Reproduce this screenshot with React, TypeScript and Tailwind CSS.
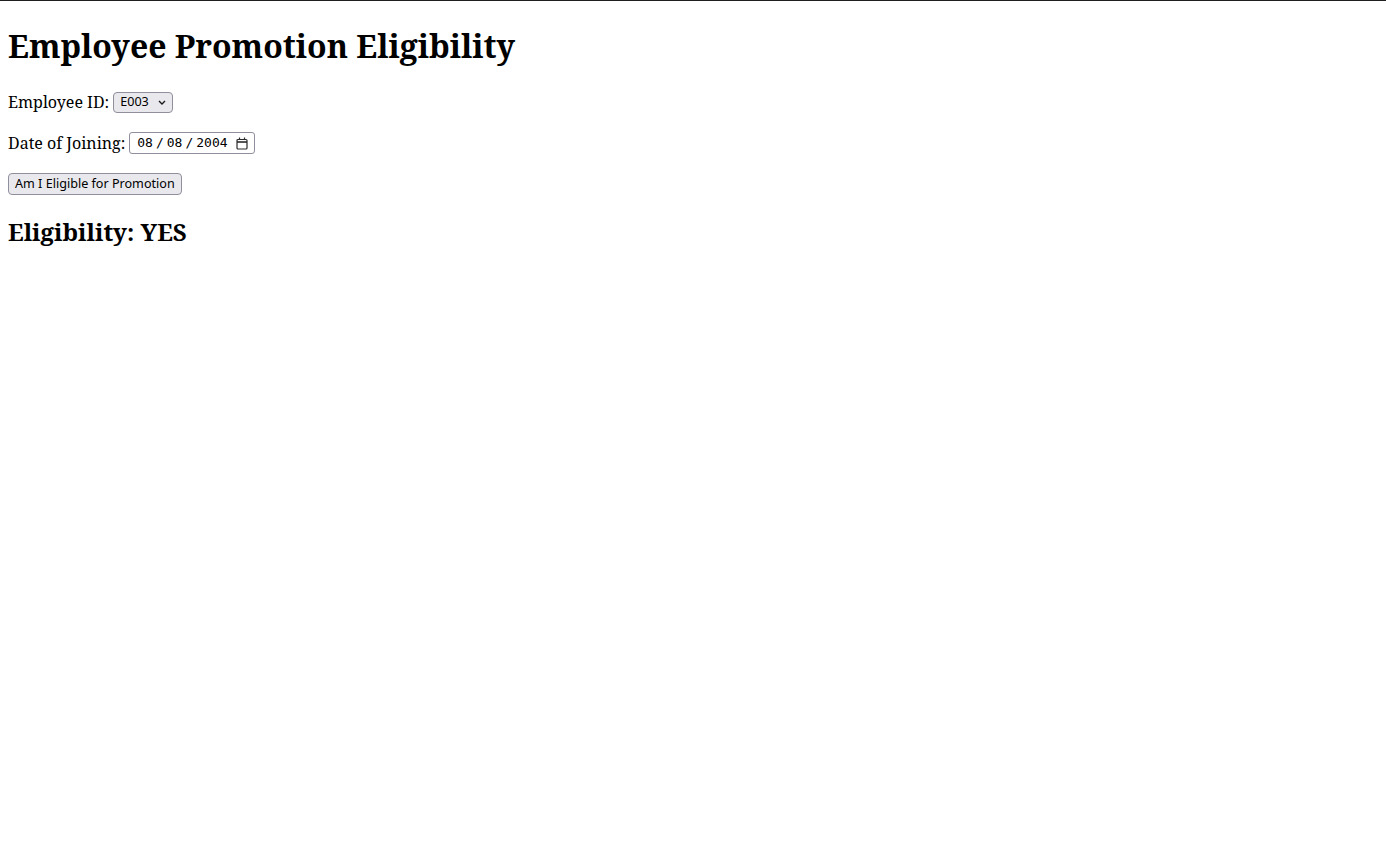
import React, { useState } from "react";

const employees = ["E001", "E002", "E003", "E004", "E005"];

const CalendarIcon = () => (
  <svg width="12" height="13" viewBox="0 0 12 13" fill="none" stroke="#2b2b2b">
    <rect x="1" y="2.5" width="10" height="9.5" rx="1" strokeWidth="1.2" />
    <line x1="1" y1="5" x2="11" y2="5" strokeWidth="1.6" />
    <line x1="3.5" y1="0.5" x2="3.5" y2="3" strokeWidth="1.2" />
    <line x1="8.5" y1="0.5" x2="8.5" y2="3" strokeWidth="1.2" />
  </svg>
);

const Chevron = () => (
  <svg width="8" height="5" viewBox="0 0 8 5" fill="none" stroke="#1a1a1a" strokeWidth="1.4">
    <path d="M1 1l3 3 3-3" />
  </svg>
);

const App = () => {
  const [id, setId] = useState("E003");
  const [result, setResult] = useState("YES");
  const joined = { d: "08", m: "08", y: "2004" };

  const check = () => {
    const start = new Date(`${joined.y}-${joined.m}-${joined.d}`).getTime();
    const years = (Date.now() - start) / (365.25 * 24 * 3600 * 1000);
    setResult(years >= 5 ? "YES" : "NO");
  };

  return (
    <div className="min-h-screen bg-white border-t border-[#1f1f1f] px-2 py-px text-black font-['Noto_Serif','DejaVu_Serif',serif] text-base">
      <h1 className="mt-[22px] mb-[24px] text-[32px] font-bold leading-[normal]">
        Employee Promotion Eligibility
      </h1>

      <div className="flex items-center h-[22px] gap-[4px]">
        <span>Employee ID:</span>
        <div className="relative inline-flex">
          <select
            value={id}
            onChange={(e) => setId(e.target.value)}
            className="appearance-none w-[60px] h-[21px] text-[12.6px] leading-none font-['Noto_Sans',sans-serif] border border-[#8f8f9d] rounded-[4px] bg-[#e9e9ed] pl-[6px] pr-[20px]"
          >
            {employees.map((e) => (
              <option key={e} value={e}>
                {e}
              </option>
            ))}
          </select>
          <span className="absolute right-[7px] top-[8px] pointer-events-none">
            <Chevron />
          </span>
        </div>
      </div>

      <div className="flex items-center h-[22px] gap-[4px] mt-[19px]">
        <span>Date of Joining:</span>
        <div className="inline-flex items-center h-[22px] border border-[#8f8f9d] rounded-[3px] bg-white pl-[7px] pr-[6px] font-['DejaVu_Sans_Mono',monospace] text-[13px]">
          <span className="flex items-center gap-[3px]">
            <span>{joined.d}</span>
            <span>/</span>
            <span>{joined.m}</span>
            <span>/</span>
            <span>{joined.y}</span>
          </span>
          <span className="ml-[8px] flex">
            <CalendarIcon />
          </span>
        </div>
      </div>

      <div className="flex items-center h-[22px] mt-[19px]">
        <button
          onClick={check}
          className="h-[22px] text-[12.6px] font-['Noto_Sans',sans-serif] border border-[#8f8f9d] rounded-[4px] bg-[#e9e9ed] px-[6px] leading-none"
        >
          Am I Eligible for Promotion
        </button>
      </div>

      <h2 className="mt-[20px] mb-[20px] text-2xl font-bold leading-[normal]">
        Eligibility: {result}
      </h2>
    </div>
  );
};

export default App;
